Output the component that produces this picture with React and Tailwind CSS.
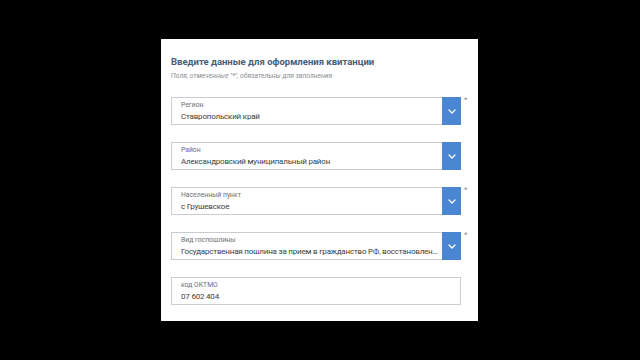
import React from "react";

const fields = [
  { label: "Регион", value: "Ставропольский край", select: true, required: true },
  { label: "Район", value: "Александровский муниципальный район", select: true, required: false },
  { label: "Населенный пункт", value: "с Грушевское", select: true, required: true },
  {
    label: "Вид госпошлины",
    value: "Государственная пошлина за прием в гражданство РФ, восстановление в гражданстве РФ",
    select: true,
    required: true,
  },
  { label: "код ОКТМО", value: "07 602 404", select: false, required: false },
];

const Chevron = () => (
  <svg width="8" height="5" viewBox="0 0 8 5" fill="none">
    <polyline points="1,1 4,4 7,1" stroke="#ffffff" strokeWidth="1.3" strokeLinecap="round" strokeLinejoin="round" />
  </svg>
);

const Field = ({ label, value, select, required }) => (
  <div className="relative w-[290px] h-[28px]">
    <div className="flex h-full border border-[#c9cdd2] bg-white">
      <div className="flex-1 min-w-0 pl-[9px] pr-[3px] pt-[3px]">
        <div className="text-[6.8px] leading-[9px] text-[#6b6f75]">{label}</div>
        <div className="text-[8px] leading-[13px] tracking-[-0.2px] text-[#3a3e42] truncate">{value}</div>
      </div>
      {select && (
        <div className="w-[19px] -my-px -mr-px bg-[#4a86d2] flex items-center justify-center">
          <Chevron />
        </div>
      )}
    </div>
    {required && (
      <span className="absolute left-[293px] -top-[1px] text-[8px] leading-[8px] text-[#8a8e94]">*</span>
    )}
  </div>
);

export default function App() {
  return (
    <div
      className="w-[640px] h-[360px] bg-black pl-[161px] pt-[39px]"
      style={{ fontFamily: 'Roboto, "Noto Sans", sans-serif' }}
    >
      <div className="w-[317px] h-[282px] bg-white pl-[10px] pt-[17px]">
        <div className="text-[9.5px] leading-[12px] font-bold text-[#4b5b78]">
          Введите данные для оформления квитанции
        </div>
        <div className="mt-[3px] text-[6.8px] leading-[10px] italic text-[#8a8e94]">
          Поля, отмеченные "*", обязательны для заполнения
        </div>
        <div className="mt-[16px] flex flex-col gap-[17px]">
          {fields.map((f) => (
            <Field key={f.label} {...f} />
          ))}
        </div>
      </div>
    </div>
  );
}
